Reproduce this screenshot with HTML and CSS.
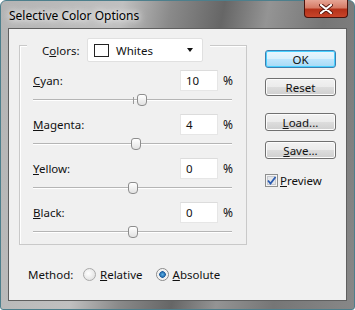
FILE: index.html
```html
<!DOCTYPE html>
<html lang="en">
<head>
    <meta charset="UTF-8">
    <title>Selective Color Options</title>
    <link rel="stylesheet" href="styles.css">
</head>
<body>
    <div class="window">
        <div class="titlebar">
            <span class="title">Selective Color Options</span>
            <div class="close">
                <svg width="14" height="10" viewBox="0 0 14 10">
                    <path d="M2 1 L12 9 M12 1 L2 9" stroke="#5a1a10" stroke-width="4" stroke-linecap="round"/>
                    <path d="M2 1 L12 9 M12 1 L2 9" stroke="#ffffff" stroke-width="2.2" stroke-linecap="round"/>
                </svg>
            </div>
        </div>

        <div class="client">
            <div class="left">
                <div class="group">
                    <div class="group-head">
                        <span class="colors-label">C<u>o</u>lors:</span>
                        <div class="select">
                            <span class="swatch"></span>
                            <span class="select-text">Whites</span>
                            <span class="arrow"></span>
                        </div>
                    </div>

                    <div class="row">
                        <span class="label"><u>C</u>yan:</span>
                        <div class="num">10</div>
                        <span class="pct">%</span>
                    </div>
                    <div class="slider">
                        <span class="tick"></span>
                        <span class="thumb" style="left: 55%"></span>
                    </div>

                    <div class="row">
                        <span class="label"><u>M</u>agenta:</span>
                        <div class="num">4</div>
                        <span class="pct">%</span>
                    </div>
                    <div class="slider">
                        <span class="tick"></span>
                        <span class="thumb" style="left: 52%"></span>
                    </div>

                    <div class="row">
                        <span class="label"><u>Y</u>ellow:</span>
                        <div class="num">0</div>
                        <span class="pct">%</span>
                    </div>
                    <div class="slider">
                        <span class="tick"></span>
                        <span class="thumb" style="left: 50%"></span>
                    </div>

                    <div class="row">
                        <span class="label"><u>B</u>lack:</span>
                        <div class="num">0</div>
                        <span class="pct">%</span>
                    </div>
                    <div class="slider">
                        <span class="tick"></span>
                        <span class="thumb" style="left: 50%"></span>
                    </div>
                </div>

                <div class="method">
                    <span class="method-label">Method:</span>
                    <span class="radio"></span>
                    <span class="radio-text"><u>R</u>elative</span>
                    <span class="radio checked"></span>
                    <span class="radio-text"><u>A</u>bsolute</span>
                </div>
            </div>

            <div class="right">
                <div class="btn default">OK</div>
                <div class="btn">Reset</div>
                <div class="btn gap"><u>L</u>oad...</div>
                <div class="btn"><u>S</u>ave...</div>
                <div class="check-row">
                    <svg class="checkbox" width="13" height="13" viewBox="0 0 13 13">
                        <rect x="0.5" y="0.5" width="12" height="12" fill="#f4f4f4" stroke="#8e8f8f"/>
                        <rect x="2.5" y="2.5" width="8" height="8" fill="#e4e6ea" stroke="#c6c9cf"/>
                        <path d="M3 6.5 L5.5 9.5 L10.5 3" fill="none" stroke="#2a5bb0" stroke-width="1.8"/>
                    </svg>
                    <span class="check-text"><u>P</u>review</span>
                </div>
            </div>
        </div>
    </div>
</body>
</html>
```

FILE: styles.css
```css
body {
    margin: 0;
    padding: 0;
    background-color: #ffffff;
    font-family: 'Noto Sans', 'Liberation Sans', sans-serif;
    font-size: 11.5px;
    color: #111;
}
.window {
    width: 355px;
    height: 310px;
    box-sizing: border-box;
    display: flex;
    flex-direction: column;
    padding: 0 7px 8px 7px;
    border: 1px solid #4d7f8c;
    border-radius: 6px 6px 3px 3px;
    background: linear-gradient(100deg, #b4b4b4 0%, #c0c0c0 30%, #8a8a8a 42%, #666666 55%, #949494 66%, #767676 80%, #888888 100%);
}
.titlebar {
    height: 27px;
    display: flex;
    align-items: flex-start;
    justify-content: space-between;
}
.title {
    margin: 6px 0 0 1px;
    font-size: 12px;
    color: #000;
    text-shadow: 0 0 6px #fff, 0 0 10px #fff;
}
.close {
    width: 44px;
    height: 18px;
    margin: -1px -1px 0 0;
    display: flex;
    align-items: center;
    justify-content: center;
    box-sizing: border-box;
    border: 1px solid #4a120b;
    border-top: none;
    border-radius: 0 0 4px 4px;
    background: linear-gradient(#e6a595 0%, #d67b66 45%, #b53219 55%, #c8452a 100%);
}
.client {
    flex: 1;
    display: flex;
    padding: 16px 0 0 10px;
    background-color: #f0f0f0;
    border: 1px solid #5f5f5f;
}
.left {
    width: 228px;
}
.group {
    border: 1px solid #c9c9c9;
    box-shadow: 1px 1px 0 #fff inset;
    padding: 0 13px 6px 13px;
}
.group-head {
    display: flex;
    align-items: center;
    width: fit-content;
    margin: -8px 0 0 -6px;
    padding: 0 7px 0 15px;
    background-color: #f0f0f0;
}
.colors-label {
    width: 45px;
}
.select {
    width: 116px;
    height: 24px;
    box-sizing: border-box;
    display: flex;
    align-items: center;
    padding: 0 6px;
    background-color: #fff;
    border: 1px solid #e0e0e0;
    border-radius: 2px;
}
.swatch {
    width: 15px;
    height: 13px;
    box-sizing: border-box;
    border: 1px solid #222;
    background-color: #fff;
}
.select-text {
    flex: 1;
    margin-left: 7px;
}
.arrow {
    width: 0;
    height: 0;
    border-left: 3.5px solid transparent;
    border-right: 3.5px solid transparent;
    border-top: 4px solid #111;
    margin-right: 3px;
}
.row {
    display: flex;
    align-items: center;
    height: 21px;
    margin-top: 8px;
}
.label {
    flex: 1;
}
.num {
    width: 38px;
    height: 21px;
    box-sizing: border-box;
    padding: 2px 0 0 5px;
    background-color: #fff;
    border: 1px solid #e6e6e6;
    border-top-color: #dcdcdc;
}
.pct {
    width: 10px;
    padding-left: 5px;
    font-size: 12px;
}
.slider {
    position: relative;
    height: 12px;
    margin: 3px 1px 0 0;
}
.slider::before {
    content: '';
    position: absolute;
    left: 0;
    right: 0;
    top: 5px;
    height: 1px;
    background-color: #b5b5b5;
    border-bottom: 1px solid #fff;
}
.tick {
    position: absolute;
    left: 50%;
    top: 3px;
    width: 1px;
    height: 7px;
    background-color: #9a9a9a;
}
.thumb {
    position: absolute;
    top: 0;
    width: 10px;
    height: 12px;
    margin-left: -5px;
    box-sizing: border-box;
    border: 1px solid #8d8d8d;
    border-radius: 3px 3px 4px 4px;
    background: linear-gradient(#ffffff, #e2e2e2);
}
.method {
    display: flex;
    align-items: center;
    margin: 21px 0 0 9px;
    height: 16px;
}
.method-label {
    width: 55px;
}
.radio {
    width: 13px;
    height: 13px;
    box-sizing: border-box;
    border-radius: 50%;
    border: 1px solid #a9a9a9;
    background: radial-gradient(circle at 40% 40%, #ffffff, #d9d9d9);
}
.radio.checked {
    border-color: #8a8a8a;
    background: radial-gradient(circle, #5ab2e8 0, #1d5fa0 3px, #e9e9e9 3.5px, #ffffff 6px);
}
.radio-text {
    margin: 0 13px 0 4px;
}
.right {
    width: 71px;
    margin-left: 18px;
    padding-top: 5px;
}
.btn {
    height: 18px;
    box-sizing: border-box;
    display: flex;
    align-items: center;
    justify-content: center;
    margin-bottom: 10px;
    border: 1px solid #707070;
    border-radius: 3px;
    background: linear-gradient(#f2f2f2 0%, #ebebeb 50%, #dddddd 51%, #cfcfcf 100%);
    box-shadow: inset 0 0 0 1px #fcfcfc;
}
.btn.default {
    border-color: #3c7fb1;
    background: linear-gradient(#eaf6fd 0%, #d9f0fc 50%, #bee6fd 51%, #a7d9f5 100%);
    box-shadow: inset 0 0 0 1px #48d0ff;
}
.btn.gap {
    margin-top: 17px;
}
.check-row {
    display: flex;
    align-items: center;
    margin-top: 14px;
}
.checkbox {
    flex: none;
}
.check-text {
    margin-left: 2px;
}
```
